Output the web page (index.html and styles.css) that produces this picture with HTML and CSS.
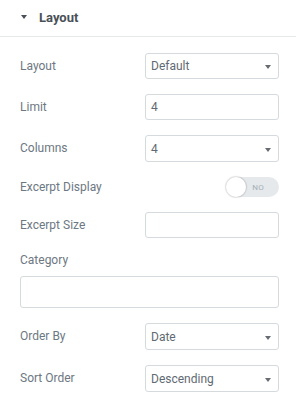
FILE: index.html
```html
<!DOCTYPE html>
<html lang="en">
  <head>
    <meta charset="UTF-8" />
    <meta name="viewport" content="width=device-width, initial-scale=1.0" />
    <title>Layout</title>
    <link rel="stylesheet" href="styles.css">
  </head>
  <body>
    <div class="section-head">
      <span class="caret"></span>
      <span class="section-title">Layout</span>
    </div>
    <div class="controls">
      <div class="control">
        <span class="label">Layout</span>
        <div class="field select">Default<span class="arrow"></span></div>
      </div>
      <div class="control">
        <span class="label">Limit</span>
        <div class="field">4</div>
      </div>
      <div class="control tall">
        <span class="label">Columns</span>
        <div class="field select">4<span class="arrow"></span></div>
      </div>
      <div class="control short">
        <span class="label">Excerpt Display</span>
        <div class="toggle"><span class="knob"></span><span class="toggle-text">NO</span></div>
      </div>
      <div class="control">
        <span class="label">Excerpt Size</span>
        <div class="field"></div>
      </div>
      <div class="control block">
        <span class="label">Category</span>
        <div class="field wide"></div>
      </div>
      <div class="control tall">
        <span class="label">Order By</span>
        <div class="field select">Date<span class="arrow"></span></div>
      </div>
      <div class="control tall">
        <span class="label">Sort Order</span>
        <div class="field select">Descending<span class="arrow"></span></div>
      </div>
    </div>
  </body>
</html>
```

FILE: styles.css
```css
* {
  margin: 0;
  padding: 0;
  box-sizing: border-box;
}

body {
  background: #ffffff;
  font-family: Roboto, "Liberation Sans", sans-serif;
  width: 296px;
}

/* HEADER */
.section-head {
  display: flex;
  align-items: center;
  height: 37px;
  padding: 0 0 2px 21px;
  border-bottom: 1px solid #e6e9ec;
}

.caret {
  width: 0;
  height: 0;
  border-left: 3.5px solid transparent;
  border-right: 3.5px solid transparent;
  border-top: 4px solid #495157;
  margin-right: 12px;
}

.section-title {
  font-size: 13px;
  font-weight: 700;
  color: #495157;
}

/* CONTROLS */
.controls {
  display: flex;
  flex-direction: column;
  gap: 15px;
  padding: 16px 17px 0 20px;
}

.control {
  display: flex;
  align-items: center;
  justify-content: space-between;
  height: 26px;
}

.control.tall {
  height: 27px;
}

.control.short {
  height: 20px;
}

.control.block {
  flex-direction: column;
  align-items: stretch;
  height: auto;
  gap: 8px;
}

.label {
  font-size: 12px;
  color: #6d7882;
  line-height: 15px;
}

.field {
  position: relative;
  width: 134px;
  height: 100%;
  border: 1px solid #d5dadf;
  border-radius: 3px;
  font-size: 12px;
  color: #616a73;
  padding: 0 5px;
  display: flex;
  align-items: center;
}

.field.wide {
  width: 100%;
  height: 32px;
}

.arrow {
  position: absolute;
  right: 7px;
  top: 50%;
  margin-top: -1px;
  width: 0;
  height: 0;
  border-left: 3.5px solid transparent;
  border-right: 3.5px solid transparent;
  border-top: 4px solid #666c72;
}

/* TOGGLE */
.toggle {
  position: relative;
  width: 53px;
  height: 20px;
  border-radius: 10px;
  background: #e6e9ec;
  display: flex;
  align-items: center;
  justify-content: flex-end;
  padding-right: 15px;
}

.knob {
  position: absolute;
  left: 0;
  top: 0;
  width: 20px;
  height: 20px;
  border-radius: 50%;
  background: #ffffff;
  box-shadow: 0 0 1px 1px rgba(0, 0, 0, 0.12);
}

.toggle-text {
  font-size: 8px;
  color: #a4afb7;
  letter-spacing: 0.3px;
}
```
